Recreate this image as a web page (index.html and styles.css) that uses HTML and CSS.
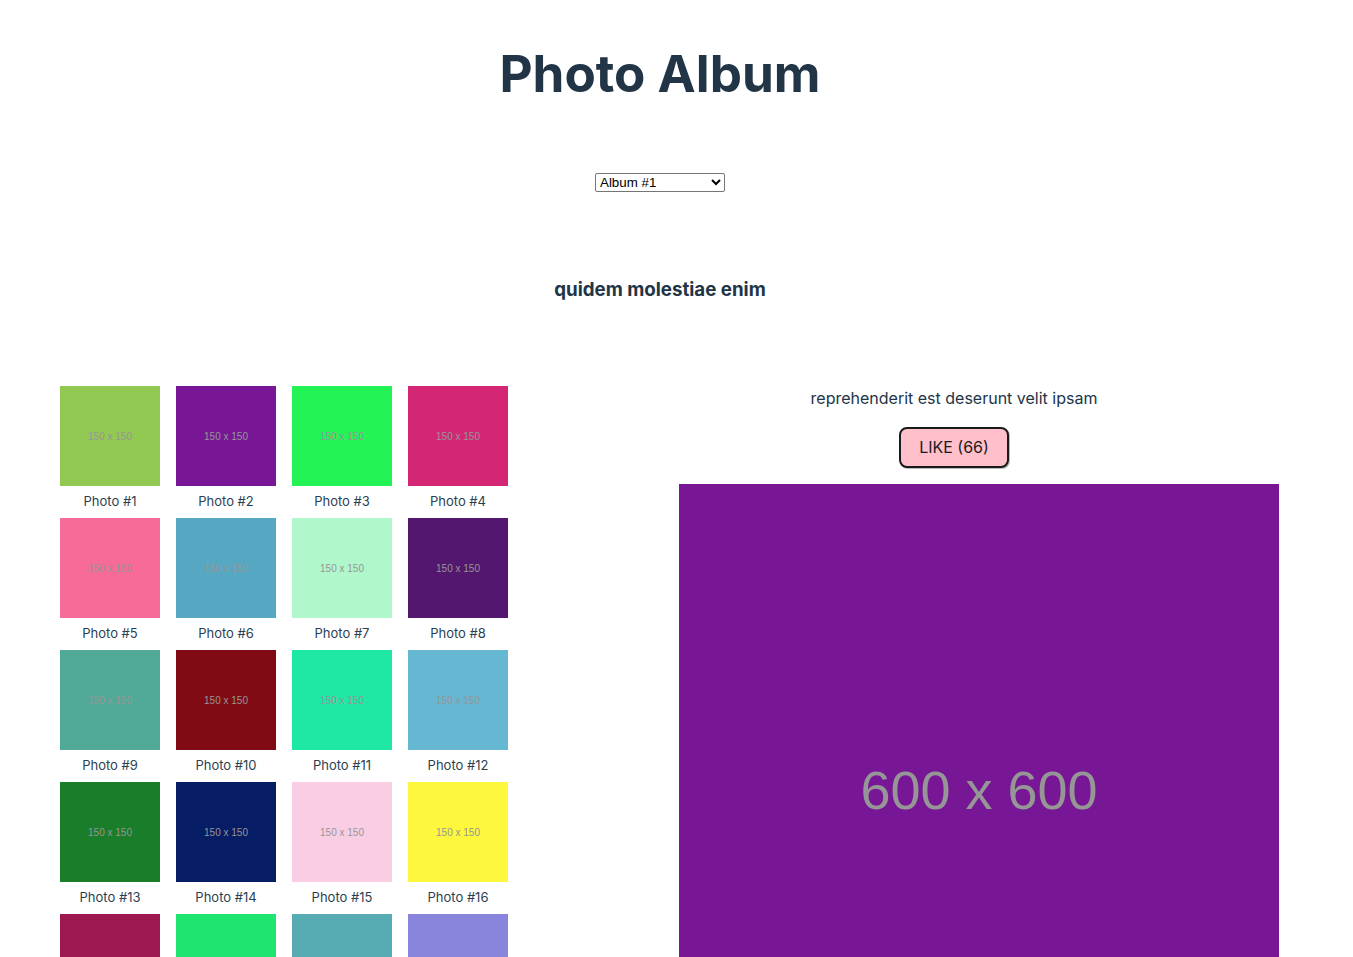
FILE: index.html
```html
<!DOCTYPE html>
<html lang="en">
<head>
<meta charset="utf-8">
<title>Photo Album</title>
<link rel="stylesheet" href="styles.css">
</head>
<body>
<div class="app">
  <h1 class="title">Photo Album</h1>
  <div class="picker">
    <select class="album-select">
      <option>Album #1</option>
      <option>Album #2</option>
      <option>Album #3</option>
    </select>
  </div>
  <h3 class="album-title">quidem molestiae enim</h3>
  <div class="main">
    <div class="thumbs">
      <div class="thumb"><div class="ph" style="background:#92c952">150 x 150</div><div class="cap">Photo #1</div></div>
      <div class="thumb"><div class="ph" style="background:#771796">150 x 150</div><div class="cap">Photo #2</div></div>
      <div class="thumb"><div class="ph" style="background:#24f355">150 x 150</div><div class="cap">Photo #3</div></div>
      <div class="thumb"><div class="ph" style="background:#d32776">150 x 150</div><div class="cap">Photo #4</div></div>
      <div class="thumb"><div class="ph" style="background:#f66b97">150 x 150</div><div class="cap">Photo #5</div></div>
      <div class="thumb"><div class="ph" style="background:#56a8c2">150 x 150</div><div class="cap">Photo #6</div></div>
      <div class="thumb"><div class="ph" style="background:#b0f7cc">150 x 150</div><div class="cap">Photo #7</div></div>
      <div class="thumb"><div class="ph" style="background:#54176f">150 x 150</div><div class="cap">Photo #8</div></div>
      <div class="thumb"><div class="ph" style="background:#51aa97">150 x 150</div><div class="cap">Photo #9</div></div>
      <div class="thumb"><div class="ph" style="background:#810b14">150 x 150</div><div class="cap">Photo #10</div></div>
      <div class="thumb"><div class="ph" style="background:#1ee8a4">150 x 150</div><div class="cap">Photo #11</div></div>
      <div class="thumb"><div class="ph" style="background:#66b7d2">150 x 150</div><div class="cap">Photo #12</div></div>
      <div class="thumb"><div class="ph" style="background:#197d29">150 x 150</div><div class="cap">Photo #13</div></div>
      <div class="thumb"><div class="ph" style="background:#061c64">150 x 150</div><div class="cap">Photo #14</div></div>
      <div class="thumb"><div class="ph" style="background:#f9cee5">150 x 150</div><div class="cap">Photo #15</div></div>
      <div class="thumb"><div class="ph" style="background:#fdf73e">150 x 150</div><div class="cap">Photo #16</div></div>
      <div class="thumb"><div class="ph" style="background:#9c184f">150 x 150</div><div class="cap">Photo #17</div></div>
      <div class="thumb"><div class="ph" style="background:#1fe46f">150 x 150</div><div class="cap">Photo #18</div></div>
      <div class="thumb"><div class="ph" style="background:#56acb2">150 x 150</div><div class="cap">Photo #19</div></div>
      <div class="thumb"><div class="ph" style="background:#8985dc">150 x 150</div><div class="cap">Photo #20</div></div>
    </div>
    <div class="viewer">
      <p class="photo-title">reprehenderit est deserunt velit ipsam</p>
      <button class="like">LIKE (66)</button>
      <div class="big">600 x 600</div>
    </div>
  </div>
</div>
</body>
</html>
```

FILE: styles.css
```css
html, body {
  margin: 0;
  background: #ffffff;
}

body {
  font-family: Inter, "Noto Sans", Arial, sans-serif;
  color: #213547;
  line-height: 1.5;
}

.app {
  padding-top: 45px;
  text-align: center;
}

.title {
  margin: 0 0 0 -33px;
  font-size: 51.2px;
  line-height: 1.1;
  font-weight: 700;
}

.picker {
  margin: 72px 0 0 -33px;
  line-height: 0;
}

.album-select {
  width: 130px;
  height: 19px;
  font-family: "Liberation Sans", Arial, sans-serif;
  font-size: 13.333px;
  color: #000;
  background: #fff;
  border: 1px solid #767676;
  border-radius: 2px;
  padding: 0;
}

.album-title {
  margin: 84px 0 0 -33px;
  font-size: 18.72px;
  line-height: 28px;
  font-weight: 700;
}

.main {
  display: grid;
  grid-template-columns: 619px 550px;
  padding-left: 60px;
  margin-top: 82px;
  text-align: left;
}

.thumbs {
  display: grid;
  grid-template-columns: repeat(4, 100px);
  column-gap: 16px;
  row-gap: 8px;
  align-content: start;
}

.thumb {
  display: flex;
  flex-direction: column;
  align-items: center;
}

.ph {
  width: 100px;
  height: 98px;
  padding-top: 2px;
  display: flex;
  align-items: center;
  justify-content: center;
  font-family: "Liberation Sans", Arial, sans-serif;
  font-size: 10px;
  line-height: 12px;
  color: #969696;
}

.cap {
  margin-top: 6px;
  font-size: 13px;
  line-height: 18px;
  font-weight: 400;
  color: #2b3f52;
  text-align: center;
}

.viewer {
  display: flex;
  flex-direction: column;
  align-items: center;
}

.photo-title {
  margin: 0;
  font-size: 16px;
  line-height: 24px;
}

.like {
  margin-top: 17px;
  height: 41px;
  padding: 0 18px 1px;
  font-family: Inter, "Noto Sans", Arial, sans-serif;
  font-size: 16px;
  font-weight: 400;
  color: #1a1a1a;
  background: #ffc0cb;
  border: 2px solid #1a1a1a;
  border-radius: 8px;
  box-shadow: 1px 1px 0 #bbbbbb;
}

.big {
  margin-top: 16px;
  align-self: flex-start;
  flex: none;
  width: 600px;
  height: 588px;
  padding-top: 12px;
  display: flex;
  align-items: center;
  justify-content: center;
  background: #771796;
  font-family: "Liberation Sans", Arial, sans-serif;
  font-size: 54px;
  line-height: normal;
  color: #969696;
}
```
